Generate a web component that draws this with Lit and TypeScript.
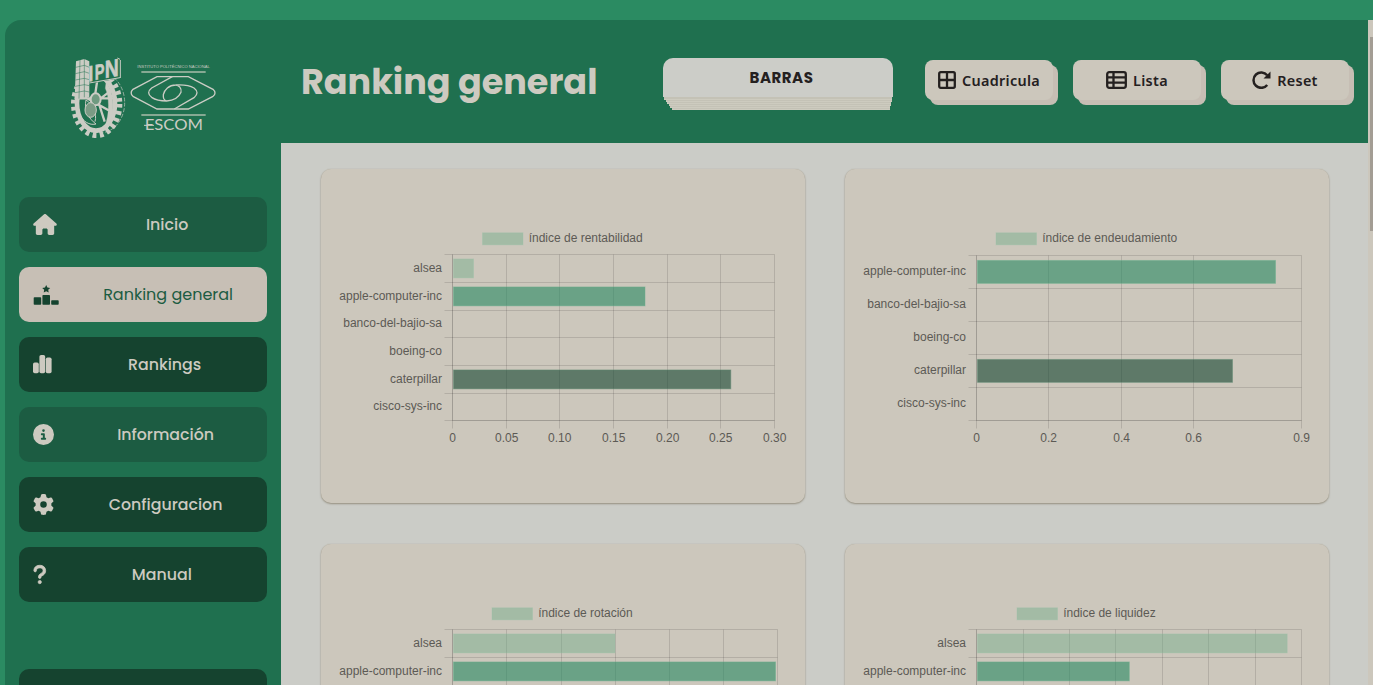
import { LitElement, html, svg, css } from "lit";
import { customElement, property } from "lit/decorators.js";

type Bar = { row: number; end: number; tone: string };
type ChartData = {
  title: string;
  legendX: number;
  titleWidth: number;
  labels: string[];
  rows: number[];
  cols: number[];
  ticks: string[];
  barHeight: number;
  bars: Bar[];
};

// Coordinates below are relative to the card that holds the chart.
const CHARTS: ChartData[] = [
  {
    title: "índice de rentabilidad", legendX: 162, titleWidth: 114,
    labels: ["alsea", "apple-computer-inc", "banco-del-bajio-sa", "boeing-co", "caterpillar", "cisco-sys-inc"],
    rows: [85.5, 113.5, 141.5, 168.5, 196.5, 224.5, 251.5],
    cols: [132.5, 186.5, 239.5, 293.5, 347.5, 400.5, 454.5],
    ticks: ["0", "0.05", "0.10", "0.15", "0.20", "0.25", "0.30"],
    barHeight: 19.7,
    bars: [{ row: 0, end: 154, tone: "light" }, { row: 1, end: 325.5, tone: "mid" }, { row: 4, end: 411.3, tone: "dark" }],
  },
  {
    title: "índice de endeudamiento", legendX: 151.5, titleWidth: 135,
    labels: ["apple-computer-inc", "banco-del-bajio-sa", "boeing-co", "caterpillar", "cisco-sys-inc"],
    rows: [86.5, 119.5, 152.5, 185.5, 218.5, 251.5],
    cols: [132.5, 204.5, 277.5, 349.5, 457.5],
    ticks: ["0", "0.2", "0.4", "0.6", "0.9"],
    barHeight: 23.7,
    bars: [{ row: 0, end: 432, tone: "mid" }, { row: 3, end: 389, tone: "dark" }],
  },
  {
    title: "índice de rotación", legendX: 171.5, titleWidth: 94.5,
    labels: ["alsea", "apple-computer-inc"],
    rows: [85.5, 113.5, 141.5, 168.5, 196.5, 224.5, 251.5],
    cols: [132.5, 186.5, 241.5, 295.5, 349.5, 403.5, 457.5],
    ticks: [],
    barHeight: 19.7,
    bars: [{ row: 0, end: 295.5, tone: "light" }, { row: 1, end: 456, tone: "mid" }],
  },
  {
    title: "índice de liquidez", legendX: 172.5, titleWidth: 92.5,
    labels: ["alsea", "apple-computer-inc"],
    rows: [85.5, 113.5, 141.5, 168.5, 196.5, 224.5, 251.5],
    cols: [132.5, 179.5, 225.5, 271.5, 318.5, 364.5, 411.5, 457.5],
    ticks: [],
    barHeight: 19.7,
    bars: [{ row: 0, end: 443.7, tone: "light" }, { row: 1, end: 285.8, tone: "mid" }],
  },
];

@customElement("bar-chart")
class BarChart extends LitElement {
  @property({ attribute: false }) data!: ChartData;

  static styles = css`
    :host { display: block; height: 334px; border-radius: 10px; background: #ccc7bc; box-shadow: 0 1px 2px #958f80, 0 0 1px #b5b0a0; }
    svg { display: block; margin-left: -1px; }
    text { font: 12px "Liberation Sans", Arial, sans-serif; fill: #5c5a55; }
    .end { text-anchor: end; }
    .mid-text { text-anchor: middle; }
    .grid { stroke: #000; stroke-opacity: 0.12; fill: none; }
    .axis { stroke: #000; stroke-opacity: 0.1; fill: none; }
    .light { fill: rgba(108, 171, 134, 0.42); stroke: rgba(150, 195, 165, 0.3); }
    .mid { fill: rgba(40, 137, 98, 0.6); stroke: rgba(105, 175, 140, 0.45); }
    .dark { fill: rgba(20, 68, 49, 0.6); stroke: rgba(95, 140, 115, 0.45); }
  `;

  render() {
    const d = this.data;
    const left = d.cols[0], right = d.cols[d.cols.length - 1];
    const top = d.rows[0], bottom = d.rows[d.rows.length - 1];
    return html`<svg width="485" height="334" viewBox="0 0 485 334">
      <rect class="light" x=${d.legendX + 0.5} y="63.8" width="40.5" height="12"></rect>
      <text x=${d.legendX + 46.7} y="73" textLength=${d.titleWidth}>${d.title}</text>
      ${d.rows.map((y) => svg`<path class="grid" d="M${left - 8} ${y}H${right}"/>`)}
      ${d.cols.map((x) => svg`<path class="grid" d="M${x} ${top}V${bottom + 8}"/>`)}
      <path class="axis" d="M${left} ${top}V${bottom}H${right}"></path>
      ${d.bars.map((b) => {
        const c = (d.rows[b.row] + d.rows[b.row + 1]) / 2;
        return svg`<rect class=${b.tone} x=${left + 1} y=${c - d.barHeight / 2 + 0.3} width=${b.end - left - 1.5} height=${d.barHeight - 0.8}/>`;
      })}
      ${d.labels.map((l, i) => svg`<text class="end" x="122" y=${Math.round((d.rows[i] + d.rows[i + 1]) / 2) + 3}>${l}</text>`)}
      ${d.ticks.map((t, i) => svg`<text class="mid-text" x=${d.cols[i] + 0.2} y=${bottom + 21.5}>${t}</text>`)}
    </svg>`;
  }
}

const house = svg`<path d="M575.8 255.5c0 18-15 32.1-32 32.1h-32l.7 160.2c0 2.700-.2 5.400-.5 8.100V472c0 22.100-17.900 40-40 40H392c-22.100 0-40-17.900-40-40V384c0-17.700-14.300-32-32-32H256c-17.700 0-32 14.300-32 32v88c0 22.100-17.900 40-40 40H104c-22.100 0-40-17.900-40-40V287.600H32c-18 0-32-14-32-32.100c0-9 3-17 10-24L266.400 8c7-7 15-8 22-8s15 2 21 7L564.800 231.500c8 7 12 15 11 24z"/>`;
const podium = svg`<path d="M12.500 0l1.200 2.500 2.800.4-2 1.900.5 2.800-2.500-1.300L10 7.600l.5-2.800-2-1.900 2.800-.4z"/><rect x="0" y="12.300" width="7.500" height="7.500" rx=".8"/><rect x="8.700" y="10" width="7.600" height="9.800" rx=".8"/><rect x="17.500" y="15.300" width="7.500" height="4.500" rx=".8"/>`;
const columns = svg`<rect x="0" y="7.600" width="5.800" height="10.700" rx="1.700"/><rect x="6.400" y="0" width="5.800" height="18.300" rx="1.700"/><rect x="12.800" y="2.600" width="5.800" height="15.700" rx="1.700"/>`;
const info = svg`<path fill-rule="evenodd" d="M256 512A256 256 0 1 0 256 0a256 256 0 1 0 0 512zM216 336h24V272H216c-13.300 0-24-10.700-24-24s10.700-24 24-24h48c13.300 0 24 10.700 24 24v88h8c13.300 0 24 10.700 24 24s-10.700 24-24 24H216c-13.300 0-24-10.700-24-24s10.700-24 24-24zm40-208a32 32 0 1 1 0 64 32 32 0 1 1 0-64z"/>`;
const gear = svg`<path fill-rule="evenodd" d="M495.9 166.6c3.2 8.700 .5 18.400-6.400 24.600l-43.300 39.400c1.100 8.300 1.700 16.800 1.700 25.400s-.6 17.100-1.700 25.400l43.300 39.400c6.900 6.200 9.600 15.900 6.400 24.600c-4.400 11.900-9.700 23.300-15.800 34.300l-4.700 8.100c-6.600 11-14 21.400-22.100 31.200c-5.900 7.200-15.700 9.600-24.500 6.800l-55.700-17.700c-13.400 10.300-28.200 18.900-44 25.400l-12.500 57.100c-2 9.100-9 16.300-18.200 17.800c-13.800 2.300-28 3.500-42.500 3.500s-28.700-1.200-42.500-3.500c-9.200-1.500-16.200-8.700-18.200-17.800l-12.500-57.100c-15.800-6.500-30.600-15.100-44-25.400L83.100 425.900c-8.800 2.800-18.600 .3-24.500-6.800c-8.100-9.800-15.500-20.200-22.100-31.200l-4.700-8.100c-6.100-11-11.400-22.400-15.800-34.300c-3.200-8.700-.5-18.400 6.400-24.600l43.300-39.400C64.600 273.100 64 264.600 64 256s.6-17.100 1.700-25.400L22.400 191.200c-6.900-6.200-9.600-15.900-6.400-24.600c4.400-11.900 9.700-23.300 15.800-34.300l4.700-8.100c6.600-11 14-21.400 22.100-31.200c5.900-7.200 15.700-9.600 24.500-6.800l55.700 17.700c13.400-10.300 28.200-18.900 44-25.400l12.500-57.100c2-9.100 9-16.300 18.200-17.800C227.300 1.200 241.500 0 256 0s28.700 1.200 42.500 3.500c9.200 1.500 16.200 8.700 18.200 17.800l12.500 57.100c15.800 6.500 30.600 15.100 44 25.400l55.700-17.700c8.800-2.800 18.600-.3 24.500 6.800c8.100 9.800 15.500 20.200 22.100 31.200l4.700 8.100c6.100 11 11.400 22.400 15.800 34.300zM256 336a80 80 0 1 0 0-160 80 80 0 1 0 0 160z"/>`;
const question = svg`<path stroke="currentColor" stroke-width="18" d="M80 160c0-35.300 28.700-64 64-64h32c35.300 0 64 28.700 64 64v3.600c0 21.800-11.100 42.100-29.400 53.800l-42.200 27.100c-25.200 16.200-40.400 44.100-40.400 74V320c0 17.700 14.300 32 32 32s32-14.300 32-32v-1.400c0-8.200 4.200-15.800 11-20.200l42.200-27.100c36.600-23.600 58.800-64.100 58.800-107.700V160c0-70.700-57.300-128-128-128H144C73.300 32 16 89.300 16 160c0 17.700 14.300 32 32 32s32-14.300 32-32zm80 320a40 40 0 1 0 0-80 40 40 0 1 0 0 80z"/>`;

const NAV = [
  { label: "Inicio", kind: "soft", icon: house, box: "0 0 576 512", w: 24, h: 21 },
  { label: "Ranking general", kind: "active", icon: podium, box: "-0.700 0 26 20", w: 26, h: 20 },
  { label: "Rankings", kind: "deep", icon: columns, box: "0 0 19 18.500", w: 19, h: 18.5 },
  { label: "Información", kind: "soft", icon: info, box: "0 0 512 512", w: 21, h: 21 },
  { label: "Configuracion", kind: "deep", icon: gear, box: "0 0 512 512", w: 21, h: 21 },
  { label: "Manual", kind: "deep", icon: question, box: "0 0 320 512", w: 13.5, h: 21 },
];

@customElement("app-root")
class AppRoot extends LitElement {
  static styles = css`
    :host { display: block; height: 685px; overflow: hidden; background: #2b8b62; font-family: Poppins, Inter, sans-serif; }
    * { box-sizing: border-box; }
    .shell { display: grid; grid-template-columns: 276px 1087px 5px; height: 665px; margin: 0 0 0 5px; }
    .page { padding-top: 20px; height: 685px; overflow: hidden; }
    .side { background: #1f704f; border-top-left-radius: 16px; padding: 36px 14px 0; display: flex; flex-direction: column; overflow: hidden; }
    .logo { display: block; margin: 0 0 58px 51px; flex: none; overflow: visible; }
    nav { display: flex; flex-direction: column; gap: 15px; }
    .item { height: 55px; flex: none; border-radius: 10px; display: flex; align-items: center; gap: 10px; padding-left: 14.200px; color: #cdcac0; font-size: 15.800px; font-weight: 500; }
    .item svg { display: block; flex: none; fill: currentColor; }
    .label { flex: 1; text-align: center; white-space: nowrap; }
    .soft { background: #1c5c42; }
    .deep { background: #15432f; }
    .active { background: #c7bfb5; color: #1c5c42; font-weight: 400; font-size: 16px; }
    .active svg { fill: #15432f; }
    .last { margin-top: 52px; }
    .main { display: flex; flex-direction: column; overflow: hidden; background: #cbccc7; }
    header { height: 123px; flex: none; background: #1f704f; display: flex; align-items: flex-start; padding: 38px 15px 0 20px; }
    h1 { margin: -4px 0 0; width: 362px; font-size: 35px; line-height: 56px; font-weight: 700; color: #cdcac0; white-space: nowrap; }
    .picker { width: 230px; }
    .face { height: 39px; border-radius: 10px 10px 0 0; background: #cccdc8; color: #24201f; font-size: 15px; font-weight: 700; line-height: 39px; text-align: center; letter-spacing: 0.5px; padding-left: 7px; }
    .step { height: 2px; background: linear-gradient(#c4c2b6 50%, #cdcbbf 50%); margin: 0 1px; }
    .step:nth-child(2) { height: 3px; }
    .step:nth-child(3) { margin: 0 1px 0 3px; }
    .step:nth-child(4) { margin: 0 2px 0 4px; }
    .step:nth-child(5) { margin: 0 2px 0 6px; }
    .step:nth-child(6) { margin: 0 3px 0 7px; }
    .step:nth-child(7) { margin: 0 3px 0 9px; }
    .tools { display: flex; gap: 20px; margin: 2px 0 0 32px; }
    .tool { width: 128px; height: 40px; flex: none; border-radius: 8px; background: #ccc7bc; box-shadow: 5px 5px 0 #c6beb4; display: flex; align-items: center; justify-content: center; gap: 6px; color: #24201f; font: 600 14.400px "Noto Sans", "Open Sans", sans-serif; letter-spacing: 0.3px; }
    .tool svg { display: block; fill: none; stroke: currentColor; stroke-width: 2.300; margin-bottom: 1px; }
    .cards { display: grid; grid-template-columns: 484px 484px; column-gap: 40px; row-gap: 41px; padding: 26px 0 0 40px; }
    .scroll { background: #ccc7bc; padding: 17px 0 0 2px; }
    .thumb { height: 194px; background: #a39d94; }
  `;

  logo() {
    return html`<svg class="logo" width="147" height="83" viewBox="30 18 441 249" fill="none" stroke="#cbccc4">
      <ellipse cx="110" cy="162" rx="67" ry="92" stroke-width="20" stroke-dasharray="11 10"></ellipse>
      <ellipse cx="108" cy="160" rx="57" ry="82" stroke-width="14"></ellipse>
      <ellipse cx="122" cy="158" rx="72" ry="90" stroke-width="2" stroke-dasharray="12 5"></ellipse>
      <path d="M112 90L106 130M58 132L162 190M158 118L118 148M44 145H160M118 165L134 215" stroke-width="7"></path>
      <ellipse cx="107" cy="148" rx="15" ry="18" fill="#6f9a80" stroke-width="6"></ellipse>
      <path d="M55 150C45 190 75 230 108 222C85 205 72 180 78 150C98 162 112 190 105 215" stroke-width="3"></path>
      <ellipse cx="92" cy="180" rx="17" ry="22" stroke-width="3" fill="#7b9b85"></ellipse>
      <path d="M138 98C162 120 166 185 147 220L134 232C150 190 148 140 136 115Z" fill="#cbccc4"></path>
      <path d="M86 40L182 25V84L86 102Z" fill="#1f704f" stroke="none"></path>
      <path d="M48 34L73 27L88 34V142L44 148Z" fill="#cbccc4" stroke="none"></path>
      <path d="M47 52L73 46L88 52M46 71L73 65L88 70M46 90L73 85L88 89M45 109L73 104L88 107M45 128L73 123L88 126M60 30L57 146M73 27V142" stroke="#1f704f" stroke-width="1.500"></path>
      <path d="M88 99L180 83M181 30V84M172 24L180 28" stroke-width="3"></path>
      <g transform="matrix(1 -.17 0 1 0 0)" fill="#cbccc4" stroke="#cbccc4" stroke-width="2" font-family="Liberation Sans, sans-serif" font-weight="700">
        <text x="85" y="109" font-size="65" textLength="15" lengthAdjust="spacingAndGlyphs">I</text>
        <text x="104" y="108" font-size="64" textLength="29" lengthAdjust="spacingAndGlyphs">P</text>
        <text x="134" y="107" font-size="73" textLength="42" lengthAdjust="spacingAndGlyphs">N</text>
      </g>
      <text x="232" y="55" font-family="Liberation Sans, sans-serif" font-size="9.500" fill="#cbccc4" stroke="none" textLength="217" lengthAdjust="spacingAndGlyphs">INSTITUTO POLITÉCNICO NACIONAL</text>
      <path d="M244 66H437M244 195H437" stroke-width="5" stroke="#a9bcab"></path>
      <path d="M291 80H385L459 118Q471 129 459 139L385 177H291L219 139Q208 129 219 118Z" stroke-width="4"></path>
      <path d="M337 80L275 114Q257 128 275 142C291 153 307 153 320 153C341 152 356 143 363 127C366 115 356 105 347 105C327 105 313 120 310 134C309 145 313 152 320 153M343 177L402 143Q420 128 402 114C387 105 364 104 347 105" stroke-width="4"></path>
      <text x="254" y="239" font-family="Lato, sans-serif" font-size="45" font-weight="400" fill="#cbccc4" stroke="none" textLength="175" lengthAdjust="spacingAndGlyphs">ESCOM</text>
      <path d="M252 226H282" stroke-width="3"></path>
    </svg>`;
  }

  render() {
    return html`<div class="page"><div class="shell">
      <aside class="side">
        ${this.logo()}
        <nav>
          ${NAV.map((n) => html`<div class="item ${n.kind}"><svg width=${n.w} height=${n.h} viewBox=${n.box}>${n.icon}</svg><span class="label">${n.label}</span></div>`)}
          <div class="item deep last"></div>
        </nav>
      </aside>
      <section class="main">
        <header>
          <h1>Ranking general</h1>
          <div class="picker">
            <div class="face">BARRAS</div>
            ${[1, 2, 3, 4, 5, 6].map(() => html`<div class="step"></div>`)}
          </div>
          <div class="tools">
            <div class="tool"><svg width="18" height="18" viewBox="0 0 18 18"><rect x="1.200" y="1.200" width="15.600" height="15.600" rx="1.500"></rect><path d="M9 1V17M1 9H17"></path></svg>Cuadricula</div>
            <div class="tool"><svg width="21" height="18" viewBox="0 0 21 18"><rect x="1.200" y="1.200" width="18.600" height="15.600" rx="2"></rect><path d="M7.500 1V17M1 6.300H20M1 11.700H20"></path></svg>Lista</div>
            <div class="tool"><svg width="19" height="18" viewBox="0 0 19 18"><path d="M15.200 14A7.700 7.700 0 1 1 15.200 4.300" stroke-width="2.500"></path><path d="M18.500 .5V7.500H11.500Z" fill="currentColor" stroke="none"></path></svg>Reset</div>
          </div>
        </header>
        <div class="cards">${CHARTS.map((c) => html`<bar-chart .data=${c}></bar-chart>`)}</div>
      </section>
      <div class="scroll"><div class="thumb"></div></div>
    </div></div>`;
  }
}
